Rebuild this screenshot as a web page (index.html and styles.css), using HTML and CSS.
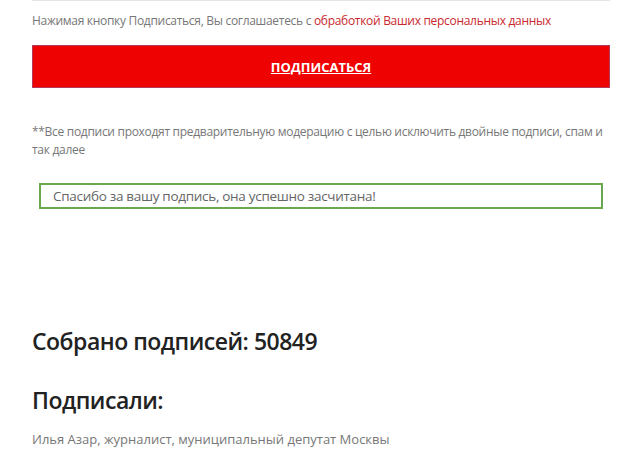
FILE: index.html
```html
<!DOCTYPE html>
<html lang="ru">
<head>
<meta charset="utf-8">
<link rel="stylesheet" href="styles.css">
</head>
<body>
<div class="page">
  <div class="field"></div>
  <p class="consent">Нажимая кнопку Подписаться, Вы соглашаетесь с <a class="consent-link" href="#">обработкой Ваших персональных данных</a></p>
  <button class="submit" type="button"><span class="submit-label">ПОДПИСАТЬСЯ</span></button>
  <p class="note">**Все подписи проходят предварительную модерацию с целью исключить двойные подписи, спам и так далее</p>
  <div class="success">Спасибо за вашу подпись, она успешно засчитана!</div>
  <h2 class="count">Собрано подписей: 50849</h2>
  <h2 class="signed">Подписали:</h2>
  <ul class="list">
    <li>Илья Азар, журналист, муниципальный депутат Москвы</li>
    <li>Борис Вишневский, депутат Законодательного собрания Санкт-Петербурга</li>
  </ul>
</div>
</body>
</html>
```

FILE: styles.css
```css
html, body {
  margin: 0;
  padding: 0;
  background: #ffffff;
}
body {
  font-family: "Open Sans", "Liberation Sans", sans-serif;
  color: #777777;
  overflow: hidden;
  height: 454px;
}
.page {
  width: 578px;
  margin-left: 32px;
  display: flex;
  flex-direction: column;
}
.field {
  height: 30px;
  margin-top: -29px;
  border: 1px solid #e4e4e4;
  box-sizing: border-box;
}
.consent {
  margin: 10px 0 0 0;
  font-size: 12px;
  letter-spacing: -0.3px;
  line-height: 20px;
  color: #777777;
  white-space: nowrap;
}
.consent-link {
  color: #c8282d;
  text-decoration: none;
}
.submit {
  margin-top: 14px;
  height: 43px;
  width: 100%;
  background: #ee0202;
  border: 1px solid #b23a5a;
  display: flex;
  align-items: center;
  justify-content: center;
  padding: 0;
  cursor: pointer;
}
.submit-label {
  font-family: "Open Sans", "Liberation Sans", sans-serif;
  font-size: 13px;
  font-weight: 700;
  color: #ffffff;
  text-decoration: underline;
  letter-spacing: 0;
}
.note {
  margin: 35px 0 0 0;
  font-size: 12px;
  letter-spacing: -0.3px;
  line-height: 18px;
  color: #777777;
}
.success {
  margin: 24px 7px 0 7px;
  height: 26px;
  box-sizing: border-box;
  border: 2px solid #6aa84f;
  padding: 0 12px;
  font-size: 13.5px;
  letter-spacing: -0.3px;
  line-height: 22px;
  color: #666666;
}
.count {
  margin: 115px 0 0 0;
  font-size: 23px;
  font-weight: 600;
  letter-spacing: -0.5px;
  line-height: 34px;
  color: #222222;
}
.signed {
  margin: 25px 0 0 0;
  font-size: 23px;
  font-weight: 600;
  letter-spacing: -0.5px;
  line-height: 34px;
  color: #222222;
}
.list {
  list-style: none;
  margin: 12px 0 0 0;
  padding: 0;
  font-size: 13px;
  letter-spacing: 0;
  line-height: 20px;
  color: #777777;
}
```
